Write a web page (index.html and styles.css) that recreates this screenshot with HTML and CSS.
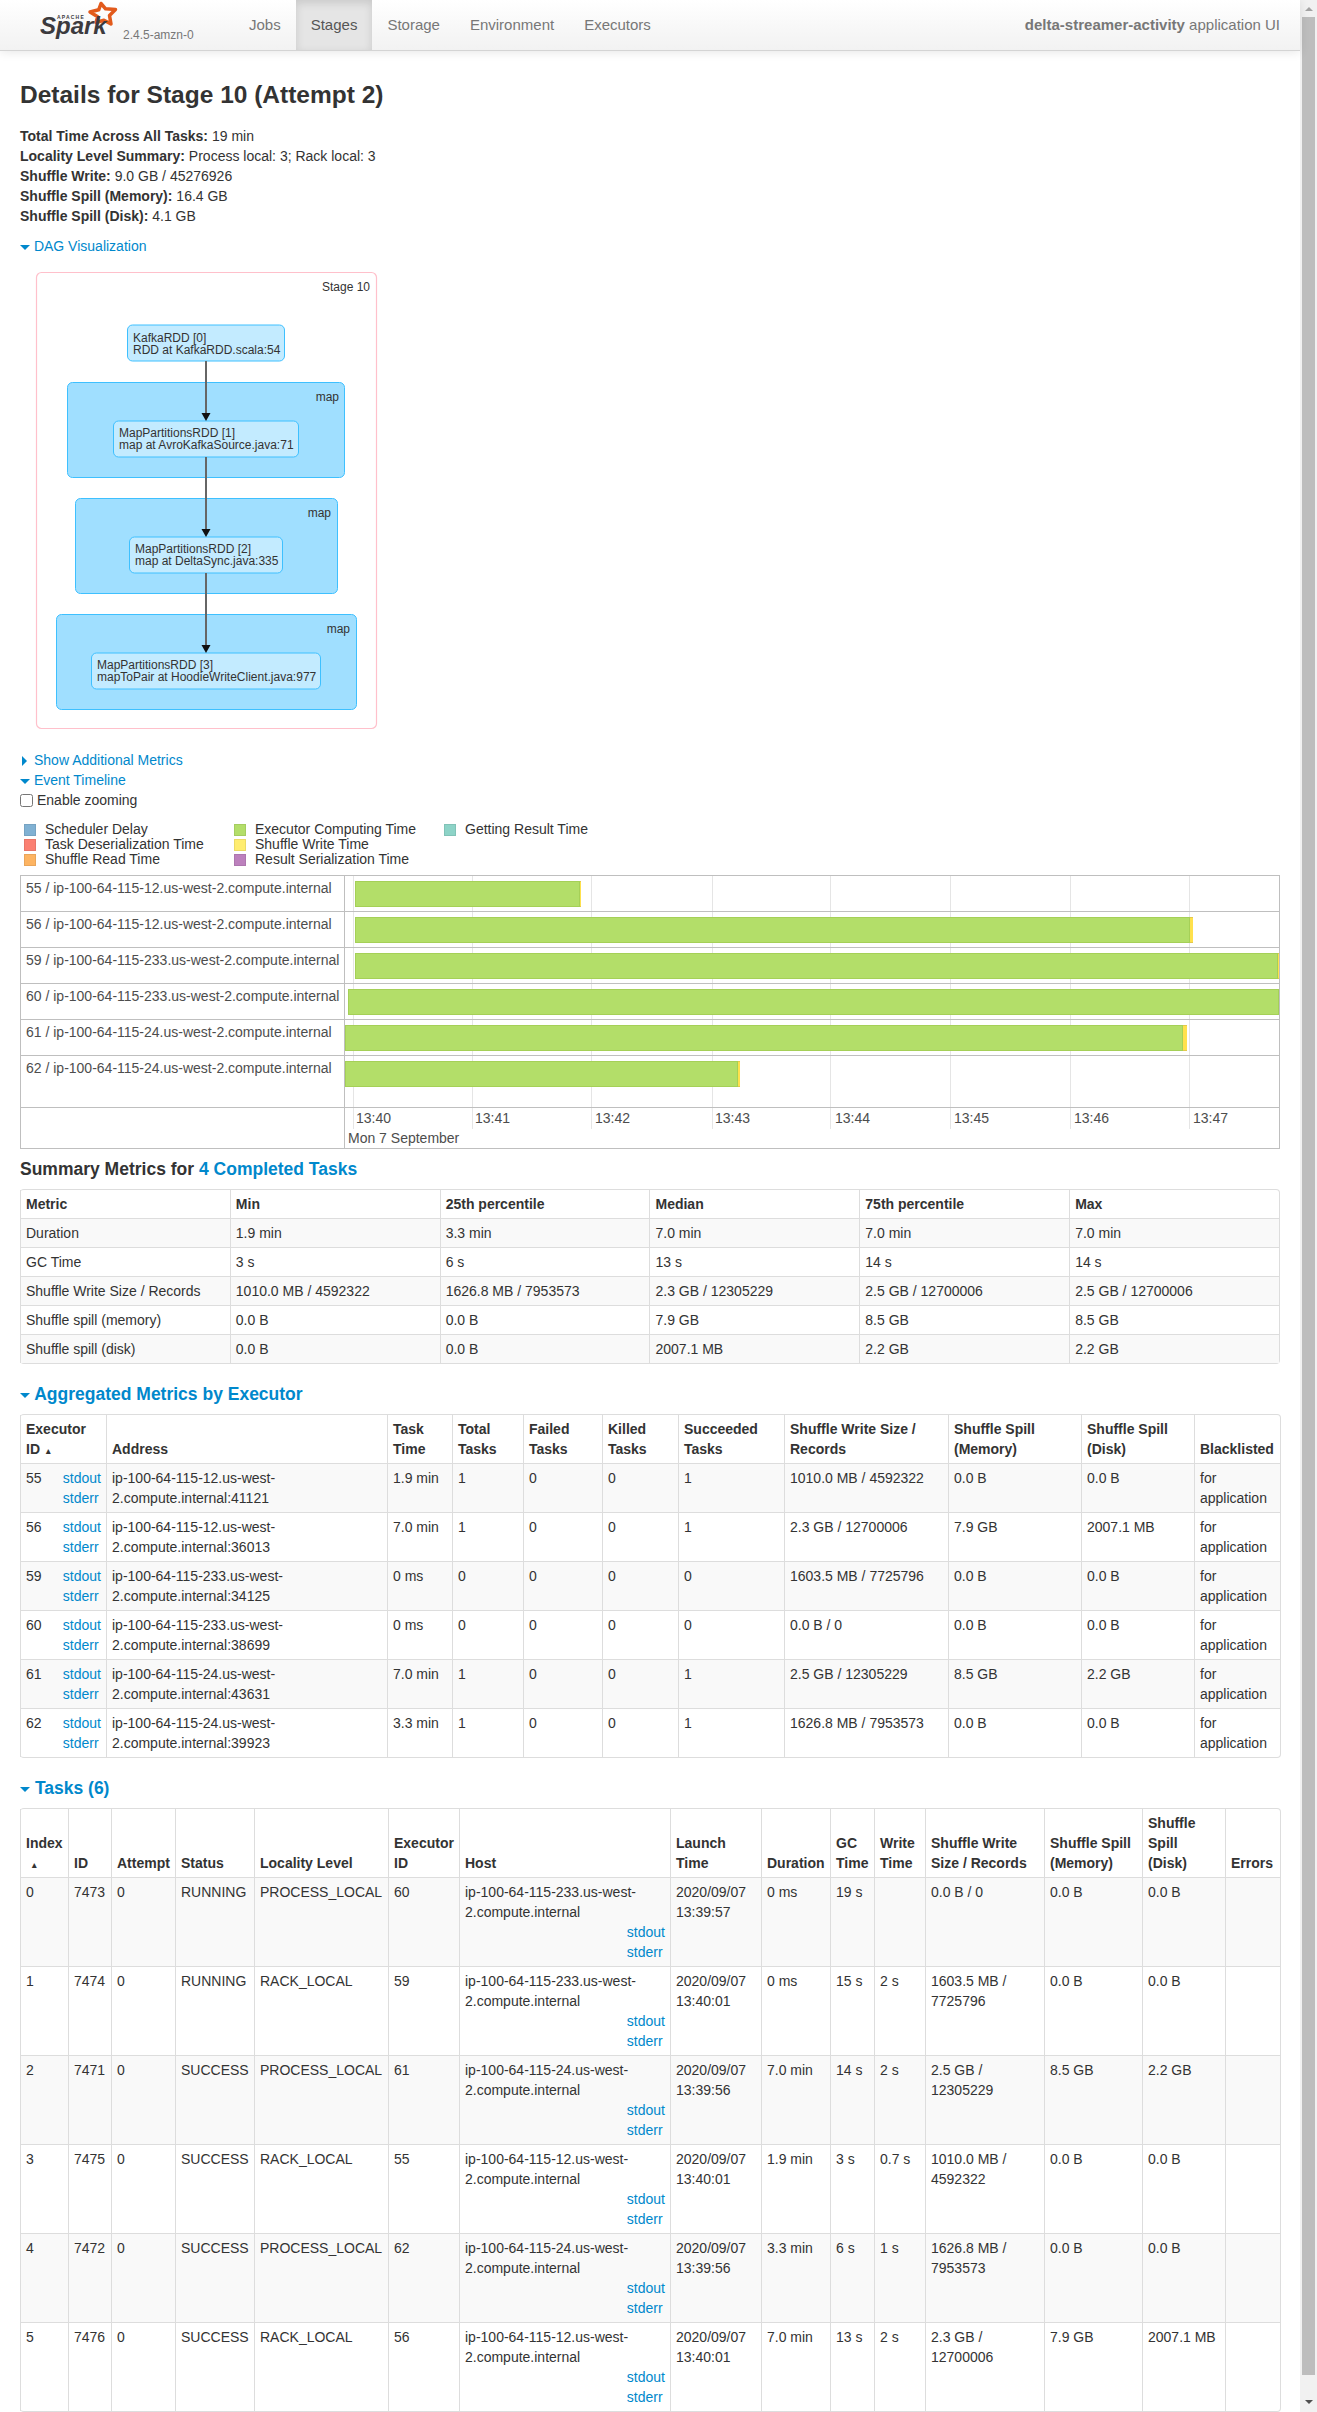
FILE: index.html
```html
<!DOCTYPE html>
<html lang="en">
<head>
<meta charset="utf-8">
<title>Stage 10 - Spark</title>
<link rel="stylesheet" href="styles.css">
</head>
<body>
<div class="shell">
<div class="page">
  <nav class="navbar">
    <a class="brand" href="#">
      <svg class="logo" width="80" height="50" viewBox="40 0 80 50">
        <path class="logo-star" d="M101 3.5 L105.6 8.8 L115.5 9.5 L109.5 15.5 L111 24 L104 20.2 L96 22.5 L97.7 16.8 L90 12 L98.7 9.8 Z"/>
        <text class="logo-apache" x="57" y="19">APACHE</text>
        <text class="logo-spark" x="40" y="34">Spark</text>
      </svg>
      <span class="version">2.4.5-amzn-0</span>
    </a>
    <ul class="nav-items">
      <li><a href="#">Jobs</a></li>
      <li class="active"><a href="#">Stages</a></li>
      <li><a href="#">Storage</a></li>
      <li><a href="#">Environment</a></li>
      <li><a href="#">Executors</a></li>
    </ul>
    <p class="app-name"><strong>delta-streamer-activity</strong> application UI</p>
  </nav>

  <main class="content">
    <h3 class="title">Details for Stage 10 (Attempt 2)</h3>
    <ul class="info">
      <li><strong>Total Time Across All Tasks:</strong> 19 min</li>
      <li><strong>Locality Level Summary:</strong> Process local: 3; Rack local: 3</li>
      <li><strong>Shuffle Write:</strong> 9.0 GB / 45276926</li>
      <li><strong>Shuffle Spill (Memory):</strong> 16.4 GB</li>
      <li><strong>Shuffle Spill (Disk):</strong> 4.1 GB</li>
    </ul>

    <div class="toggle"><span class="arrow-open"></span> <a href="#">DAG Visualization</a></div>
    <svg class="dag" width="380" height="494" viewBox="20 256 380 494">
      <rect class="dag-stage" x="36.5" y="272.5" width="340" height="456" rx="5"/>
      <text class="dag-label" x="370" y="291">Stage 10</text>

      <rect class="dag-cluster" x="67.5" y="382.5" width="277" height="95" rx="5"/>
      <text class="dag-label" x="339" y="401">map</text>
      <rect class="dag-cluster" x="75.5" y="498.5" width="262" height="95" rx="5"/>
      <text class="dag-label" x="331" y="517">map</text>
      <rect class="dag-cluster" x="56.5" y="614.5" width="300" height="95" rx="5"/>
      <text class="dag-label" x="350" y="633">map</text>

      <rect class="dag-node" x="127.5" y="325" width="157" height="36" rx="5"/>
      <text class="dag-text" x="133" y="342">KafkaRDD [0]</text>
      <text class="dag-text" x="133" y="354">RDD at KafkaRDD.scala:54</text>

      <rect class="dag-node" x="113.5" y="421" width="185" height="36" rx="5"/>
      <text class="dag-text" x="119" y="437">MapPartitionsRDD [1]</text>
      <text class="dag-text" x="119" y="449">map at AvroKafkaSource.java:71</text>

      <rect class="dag-node" x="129.5" y="537" width="153" height="36" rx="5"/>
      <text class="dag-text" x="135" y="553">MapPartitionsRDD [2]</text>
      <text class="dag-text" x="135" y="565">map at DeltaSync.java:335</text>

      <rect class="dag-node" x="91.5" y="653" width="229" height="36" rx="5"/>
      <text class="dag-text" x="97" y="669">MapPartitionsRDD [3]</text>
      <text class="dag-text" x="97" y="681">mapToPair at HoodieWriteClient.java:977</text>

      <path class="dag-edge" d="M206 361 V414 M206 457 V530 M206 573 V646"/>
      <path class="dag-head" d="M201.5 413 H210.5 L206 421 Z M201.5 529 H210.5 L206 537 Z M201.5 645 H210.5 L206 653 Z"/>
    </svg>

    <div class="toggle"><span class="arrow-closed"></span><a href="#">Show Additional Metrics</a></div>
    <div class="toggle"><span class="arrow-open"></span> <a href="#">Event Timeline</a></div>
    <label class="zoom-check"><input type="checkbox"> Enable zooming</label>

    <div class="legend">
      <div class="legend-item"><span class="swatch sw-delay"></span>Scheduler Delay</div>
      <div class="legend-item"><span class="swatch sw-exec"></span>Executor Computing Time</div>
      <div class="legend-item"><span class="swatch sw-result"></span>Getting Result Time</div>
      <div class="legend-item"><span class="swatch sw-deser"></span>Task Deserialization Time</div>
      <div class="legend-item"><span class="swatch sw-write"></span>Shuffle Write Time</div>
      <div class="legend-item legend-gap"></div>
      <div class="legend-item"><span class="swatch sw-read"></span>Shuffle Read Time</div>
      <div class="legend-item"><span class="swatch sw-ser"></span>Result Serialization Time</div>
    </div>

    <div class="timeline">
      <div class="tl-labels">
        <div class="tl-label">55 / ip-100-64-115-12.us-west-2.compute.internal</div>
        <div class="tl-label">56 / ip-100-64-115-12.us-west-2.compute.internal</div>
        <div class="tl-label">59 / ip-100-64-115-233.us-west-2.compute.internal</div>
        <div class="tl-label">60 / ip-100-64-115-233.us-west-2.compute.internal</div>
        <div class="tl-label">61 / ip-100-64-115-24.us-west-2.compute.internal</div>
        <div class="tl-label tl-last">62 / ip-100-64-115-24.us-west-2.compute.internal</div>
        <div class="tl-axis-blank"></div>
      </div>
      <div class="tl-center">
        <div class="tl-grid">
          <i style="left:8px"></i><i style="left:127px"></i><i style="left:246px"></i><i style="left:367px"></i>
          <i style="left:485px"></i><i style="left:605px"></i><i style="left:725px"></i><i style="left:844px"></i>
        </div>
        <div class="tl-track"><div class="bar" style="left:10px"><span class="seg-exec" style="width:225px"></span><span class="seg-write" style="width:1px"></span></div></div>
        <div class="tl-track"><div class="bar" style="left:10px"><span class="seg-exec" style="width:835px"></span><span class="seg-write" style="width:3px"></span></div></div>
        <div class="tl-track"><div class="bar" style="left:10px"><span class="seg-exec" style="width:923px"></span><span class="seg-write" style="width:1px"></span></div></div>
        <div class="tl-track"><div class="bar" style="left:3px"><span class="seg-exec" style="width:931px"></span></div></div>
        <div class="tl-track"><div class="bar" style="left:0"><span class="seg-exec" style="width:838px"></span><span class="seg-write" style="width:4px"></span></div></div>
        <div class="tl-track tl-last"><div class="bar" style="left:0"><span class="seg-exec" style="width:393px"></span><span class="seg-write" style="width:2px"></span></div></div>
        <div class="tl-axis">
          <span class="tick" style="left:11px">13:40</span><span class="tick" style="left:130px">13:41</span>
          <span class="tick" style="left:250px">13:42</span><span class="tick" style="left:370px">13:43</span>
          <span class="tick" style="left:490px">13:44</span><span class="tick" style="left:609px">13:45</span>
          <span class="tick" style="left:729px">13:46</span><span class="tick" style="left:848px">13:47</span>
          <span class="tick tick-date" style="left:3px">Mon 7 September</span>
        </div>
      </div>
    </div>

    <h4 class="section section-first">Summary Metrics for <a href="#">4 Completed Tasks</a></h4>
    <table class="table summary">
      <thead><tr><th>Metric</th><th>Min</th><th>25th percentile</th><th>Median</th><th>75th percentile</th><th>Max</th></tr></thead>
      <tbody>
        <tr><td>Duration</td><td>1.9 min</td><td>3.3 min</td><td>7.0 min</td><td>7.0 min</td><td>7.0 min</td></tr>
        <tr><td>GC Time</td><td>3 s</td><td>6 s</td><td>13 s</td><td>14 s</td><td>14 s</td></tr>
        <tr><td>Shuffle Write Size / Records</td><td>1010.0 MB / 4592322</td><td>1626.8 MB / 7953573</td><td>2.3 GB / 12305229</td><td>2.5 GB / 12700006</td><td>2.5 GB / 12700006</td></tr>
        <tr><td>Shuffle spill (memory)</td><td>0.0 B</td><td>0.0 B</td><td>7.9 GB</td><td>8.5 GB</td><td>8.5 GB</td></tr>
        <tr><td>Shuffle spill (disk)</td><td>0.0 B</td><td>0.0 B</td><td>2007.1 MB</td><td>2.2 GB</td><td>2.2 GB</td></tr>
      </tbody>
    </table>

    <h4 class="section"><span class="arrow-open"></span> <a href="#">Aggregated Metrics by Executor</a></h4>
    <table class="table executors">
      <colgroup><col><col><col><col><col><col><col><col><col><col><col></colgroup>
      <thead><tr><th>Executor ID<span class="sort-ind">&nbsp;&#x25B4;</span></th><th>Address</th><th>Task Time</th><th>Total Tasks</th><th>Failed Tasks</th><th>Killed Tasks</th><th>Succeeded Tasks</th><th>Shuffle Write Size / Records</th><th>Shuffle Spill (Memory)</th><th>Shuffle Spill (Disk)</th><th>Blacklisted</th></tr></thead>
      <tbody>
        <tr><td><div class="exec-id"><span>55</span><div class="logs"><a href="#">stdout</a><a href="#">stderr</a></div></div></td><td>ip-100-64-115-12.us-west-2.compute.internal:41121</td><td>1.9 min</td><td>1</td><td>0</td><td>0</td><td>1</td><td>1010.0 MB / 4592322</td><td>0.0 B</td><td>0.0 B</td><td>for application</td></tr>
        <tr><td><div class="exec-id"><span>56</span><div class="logs"><a href="#">stdout</a><a href="#">stderr</a></div></div></td><td>ip-100-64-115-12.us-west-2.compute.internal:36013</td><td>7.0 min</td><td>1</td><td>0</td><td>0</td><td>1</td><td>2.3 GB / 12700006</td><td>7.9 GB</td><td>2007.1 MB</td><td>for application</td></tr>
        <tr><td><div class="exec-id"><span>59</span><div class="logs"><a href="#">stdout</a><a href="#">stderr</a></div></div></td><td>ip-100-64-115-233.us-west-2.compute.internal:34125</td><td>0 ms</td><td>0</td><td>0</td><td>0</td><td>0</td><td>1603.5 MB / 7725796</td><td>0.0 B</td><td>0.0 B</td><td>for application</td></tr>
        <tr><td><div class="exec-id"><span>60</span><div class="logs"><a href="#">stdout</a><a href="#">stderr</a></div></div></td><td>ip-100-64-115-233.us-west-2.compute.internal:38699</td><td>0 ms</td><td>0</td><td>0</td><td>0</td><td>0</td><td>0.0 B / 0</td><td>0.0 B</td><td>0.0 B</td><td>for application</td></tr>
        <tr><td><div class="exec-id"><span>61</span><div class="logs"><a href="#">stdout</a><a href="#">stderr</a></div></div></td><td>ip-100-64-115-24.us-west-2.compute.internal:43631</td><td>7.0 min</td><td>1</td><td>0</td><td>0</td><td>1</td><td>2.5 GB / 12305229</td><td>8.5 GB</td><td>2.2 GB</td><td>for application</td></tr>
        <tr><td><div class="exec-id"><span>62</span><div class="logs"><a href="#">stdout</a><a href="#">stderr</a></div></div></td><td>ip-100-64-115-24.us-west-2.compute.internal:39923</td><td>3.3 min</td><td>1</td><td>0</td><td>0</td><td>1</td><td>1626.8 MB / 7953573</td><td>0.0 B</td><td>0.0 B</td><td>for application</td></tr>
      </tbody>
    </table>

    <h4 class="section"><span class="arrow-open"></span> <a href="#">Tasks (6)</a></h4>
    <table class="table tasks">
      <colgroup><col><col><col><col><col><col><col><col><col><col><col><col><col><col><col></colgroup>
      <thead><tr><th>Index<br><span class="sort-ind">&nbsp;&#x25B4;</span></th><th>ID</th><th>Attempt</th><th>Status</th><th>Locality Level</th><th>Executor ID</th><th>Host</th><th>Launch Time</th><th>Duration</th><th>GC Time</th><th>Write Time</th><th>Shuffle Write Size / Records</th><th>Shuffle Spill (Memory)</th><th>Shuffle Spill (Disk)</th><th>Errors</th></tr></thead>
      <tbody>
        <tr><td>0</td><td>7473</td><td>0</td><td>RUNNING</td><td>PROCESS_LOCAL</td><td>60</td><td>ip-100-64-115-233.us-west-2.compute.internal<div class="logs logs-right"><a href="#">stdout</a><a href="#">stderr</a></div></td><td>2020/09/07 13:39:57</td><td>0 ms</td><td>19 s</td><td></td><td>0.0 B / 0</td><td>0.0 B</td><td>0.0 B</td><td></td></tr>
        <tr><td>1</td><td>7474</td><td>0</td><td>RUNNING</td><td>RACK_LOCAL</td><td>59</td><td>ip-100-64-115-233.us-west-2.compute.internal<div class="logs logs-right"><a href="#">stdout</a><a href="#">stderr</a></div></td><td>2020/09/07 13:40:01</td><td>0 ms</td><td>15 s</td><td>2 s</td><td>1603.5 MB / 7725796</td><td>0.0 B</td><td>0.0 B</td><td></td></tr>
        <tr><td>2</td><td>7471</td><td>0</td><td>SUCCESS</td><td>PROCESS_LOCAL</td><td>61</td><td>ip-100-64-115-24.us-west-2.compute.internal<div class="logs logs-right"><a href="#">stdout</a><a href="#">stderr</a></div></td><td>2020/09/07 13:39:56</td><td>7.0 min</td><td>14 s</td><td>2 s</td><td>2.5 GB / 12305229</td><td>8.5 GB</td><td>2.2 GB</td><td></td></tr>
        <tr><td>3</td><td>7475</td><td>0</td><td>SUCCESS</td><td>RACK_LOCAL</td><td>55</td><td>ip-100-64-115-12.us-west-2.compute.internal<div class="logs logs-right"><a href="#">stdout</a><a href="#">stderr</a></div></td><td>2020/09/07 13:40:01</td><td>1.9 min</td><td>3 s</td><td>0.7 s</td><td>1010.0 MB / 4592322</td><td>0.0 B</td><td>0.0 B</td><td></td></tr>
        <tr><td>4</td><td>7472</td><td>0</td><td>SUCCESS</td><td>PROCESS_LOCAL</td><td>62</td><td>ip-100-64-115-24.us-west-2.compute.internal<div class="logs logs-right"><a href="#">stdout</a><a href="#">stderr</a></div></td><td>2020/09/07 13:39:56</td><td>3.3 min</td><td>6 s</td><td>1 s</td><td>1626.8 MB / 7953573</td><td>0.0 B</td><td>0.0 B</td><td></td></tr>
        <tr><td>5</td><td>7476</td><td>0</td><td>SUCCESS</td><td>RACK_LOCAL</td><td>56</td><td>ip-100-64-115-12.us-west-2.compute.internal<div class="logs logs-right"><a href="#">stdout</a><a href="#">stderr</a></div></td><td>2020/09/07 13:40:01</td><td>7.0 min</td><td>13 s</td><td>2 s</td><td>2.3 GB / 12700006</td><td>7.9 GB</td><td>2007.1 MB</td><td></td></tr>
      </tbody>
    </table>
  </main>
</div>
<aside class="scrollbar">
  <div class="sb-btn"><span class="sb-up"></span></div>
  <div class="sb-thumb"></div>
  <div class="sb-rest"><span class="sb-down"></span></div>
</aside>
</div>
</body>
</html>
```
FILE: styles.css
```css
* { box-sizing: border-box; }
html, body { margin: 0; padding: 0; height: 2412px; overflow: hidden; background: #fff; }
body {
  font-family: "Liberation Sans", Arial, "DejaVu Sans", sans-serif;
  font-size: 14px;
  line-height: 20px;
  color: #333;
}
a { color: #0088cc; text-decoration: none; }

.shell { display: flex; width: 1317px; height: 2412px; }
.page { width: 1300px; flex: none; }

/* scrollbar */
.scrollbar { width: 17px; flex: none; background: #f1f1f1; display: flex; flex-direction: column; align-items: center; }
.sb-btn { height: 17px; width: 100%; display: flex; align-items: center; justify-content: center; }
.sb-up { width: 0; height: 0; border-left: 4px solid transparent; border-right: 4px solid transparent; border-bottom: 4px solid #a3a3a3; }
.sb-thumb { width: 13px; height: 2358px; background: #bdbdbd; }
.sb-rest { flex: 1; display: flex; align-items: flex-end; justify-content: center; padding-bottom: 8px; }
.sb-down { width: 0; height: 0; border-left: 4px solid transparent; border-right: 4px solid transparent; border-top: 4px solid #505050; }

/* navbar */
.navbar {
  display: flex;
  height: 51px;
  background: linear-gradient(to bottom, #ffffff, #f2f2f2);
  border-bottom: 1px solid #d4d4d4;
  box-shadow: 0 1px 10px rgba(0, 0, 0, .1);
  position: relative;
  font-size: 15px;
}
.brand { display: flex; width: 234px; padding-left: 40px; flex: none; }
.logo { flex: none; margin-right: 3px; }
.logo-star { fill: none; stroke: #e25a1c; stroke-width: 3.5; stroke-linejoin: round; }
.logo-apache { font: bold 5px "Liberation Sans", sans-serif; letter-spacing: 1.2px; fill: #3c3a3e; }
.logo-spark { font: italic bold 24px "Liberation Sans", sans-serif; fill: #3c3a3e; }
.version { font-size: 12px; line-height: 14px; color: #777; padding-top: 28px; }
.nav-items { display: flex; list-style: none; margin: 0; padding: 0; }
.nav-items a { display: block; padding: 15px; color: #777; }
.nav-items .active a { color: #555; background: #e5e5e5; box-shadow: inset 0 3px 8px rgba(0, 0, 0, .125); height: 50px; }
.app-name { margin: 0 0 0 auto; padding-right: 20px; line-height: 50px; color: #777; }

/* content */
.content { padding: 0 20px; }
.title { margin: 24px 0 11px; font-size: 24.5px; line-height: 40px; font-weight: bold; }
.info { list-style: none; margin: 0 0 10px; padding: 0; }
.toggle { height: 20px; }
.arrow-open { display: inline-block; width: 0; height: 0; border-left: 5px solid transparent; border-right: 5px solid transparent; border-top: 5px solid #0088cc; vertical-align: middle; }
.arrow-closed { display: inline-block; width: 0; height: 0; border-top: 5px solid transparent; border-bottom: 5px solid transparent; border-left: 5px solid #0088cc; margin: 0 7px 0 2px; vertical-align: middle; }

/* DAG */
.dag { display: block; }
.dag text { font-family: "Liberation Sans", Arial, sans-serif; font-size: 12px; fill: #333; }
.dag-stage { fill: #fff; stroke: #ffc0cb; stroke-width: 1.2; }
.dag-cluster { fill: #a0dfff; stroke: #3ec0ff; stroke-width: 1; }
.dag-node { fill: #c3ebff; stroke: #3ec0ff; stroke-width: 1; }
.dag-label { text-anchor: end; }
.dag-edge { fill: none; stroke: #666; stroke-width: 2; }
.dag-head { fill: #111; }

/* timeline */
.zoom-check { display: flex; align-items: center; height: 20px; gap: 4px; }
.zoom-check input { margin: 0; width: 13px; height: 13px; flex: none; }
.legend { display: grid; grid-template-columns: repeat(3, 210px); grid-auto-rows: 15px; margin: 12px 0 8px 4px; height: 45px; }
.legend-item { display: flex; align-items: center; gap: 9px; white-space: nowrap; line-height: 15px; }
.swatch { width: 12px; height: 12px; flex: none; border: 1px solid rgba(0, 0, 0, .08); }
.sw-delay { background: #80b1d3; }
.sw-exec { background: #b3de69; }
.sw-result { background: #8dd3c7; }
.sw-deser { background: #fb8072; }
.sw-write { background: #ffed6f; }
.sw-read { background: #fdb462; }
.sw-ser { background: #bc80bd; }

.timeline { display: flex; height: 274px; border: 1px solid #bfbfbf; color: #4d4d4d; }
.tl-labels { width: 324px; flex: none; border-right: 1px solid #bfbfbf; }
.tl-center { position: relative; flex: 1; overflow: hidden; }
.tl-label, .tl-track { height: 36px; border-bottom: 1px solid #bfbfbf; }
.tl-label { padding: 2px 0 0 5px; white-space: nowrap; }
.tl-last { height: 52px; }
.tl-track { position: relative; }
.tl-grid { position: absolute; left: 0; top: 0; right: 0; height: 253px; }
.tl-grid i { position: absolute; top: 0; bottom: 0; width: 1px; background: #e5e5e5; }
.bar { position: absolute; top: 5px; height: 26px; display: flex; }
.seg-exec { display: block; height: 26px; background: #b3de69; border: 1px solid #a5d057; }
.seg-write { display: block; height: 26px; background: #ffe14d; border-top: 1px solid #e3c84c; border-bottom: 1px solid #e3c84c; }
.tl-axis { position: relative; height: 40px; }
.tick { position: absolute; top: 0; white-space: nowrap; }
.tick-date { top: 20px; }

/* tables */
.section { margin: 0 0 10px; font-size: 17.5px; line-height: 20px; font-weight: bold; }
.section-first { margin-top: 10px; }
.table {
  width: 1260px;
  table-layout: fixed;
  border-collapse: separate;
  border-spacing: 0;
  border: 1px solid #ddd;
  border-left: 0;
  border-radius: 4px;
  margin-bottom: 20px;
}
.table th, .table td {
  padding: 4px 5px;
  line-height: 20px;
  text-align: left;
  border-left: 1px solid #ddd;
  border-top: 1px solid #ddd;
}
.table th { vertical-align: bottom; font-weight: bold; }
.table td { vertical-align: top; }
.table thead tr:first-child th { border-top: 0; }
.table tbody tr:nth-child(odd) td { background: #f9f9f9; }
.tasks { margin-bottom: 0; }
.sort-ind { font-size: 10px; line-height: 1; margin-left: 3px; }
.exec-id { display: flex; justify-content: space-between; }
.logs { display: flex; flex-direction: column; align-items: flex-start; }
.logs-right { width: fit-content; margin-left: auto; }

.executors col:nth-child(1) { width: 86px; }
.executors col:nth-child(2) { width: 281px; }
.executors col:nth-child(3) { width: 65px; }
.executors col:nth-child(4) { width: 71px; }
.executors col:nth-child(5) { width: 79px; }
.executors col:nth-child(6) { width: 76px; }
.executors col:nth-child(7) { width: 106px; }
.executors col:nth-child(8) { width: 164px; }
.executors col:nth-child(9) { width: 133px; }
.executors col:nth-child(10) { width: 113px; }
.executors col:nth-child(11) { width: 86px; }

.tasks col:nth-child(1) { width: 48px; }
.tasks col:nth-child(2) { width: 43px; }
.tasks col:nth-child(3) { width: 64px; }
.tasks col:nth-child(4) { width: 79px; }
.tasks col:nth-child(5) { width: 134px; }
.tasks col:nth-child(6) { width: 71px; }
.tasks col:nth-child(7) { width: 211px; }
.tasks col:nth-child(8) { width: 91px; }
.tasks col:nth-child(9) { width: 69px; }
.tasks col:nth-child(10) { width: 44px; }
.tasks col:nth-child(11) { width: 51px; }
.tasks col:nth-child(12) { width: 119px; }
.tasks col:nth-child(13) { width: 98px; }
.tasks col:nth-child(14) { width: 83px; }
.tasks col:nth-child(15) { width: 55px; }
```
